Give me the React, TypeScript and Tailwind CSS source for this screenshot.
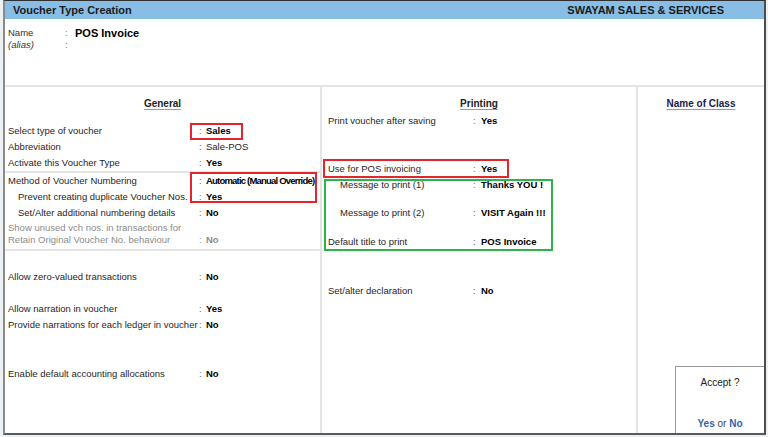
type Row = {
  label: string;
  value: string;
  indent?: boolean;
  bold?: boolean;
  className?: string;
};

function Field({ label, value, indent, bold = true, className = "" }: Row) {
  return (
    <div className={`flex h-[16px] items-center ${className}`}>
      <div className={`w-[191px] shrink-0 whitespace-nowrap ${indent ? "pl-[10px]" : ""}`}>{label}</div>
      <div className="w-[7px] shrink-0 text-[#666]">:</div>
      <div className={`whitespace-nowrap ${bold ? "font-bold text-black" : ""}`}>{value}</div>
    </div>
  );
}

function PrintField({ label, value, indent, className = "" }: Row) {
  return (
    <div className={`flex h-[16px] items-center ${className}`}>
      <div className={`w-[145px] shrink-0 whitespace-nowrap ${indent ? "pl-[12px]" : ""}`}>{label}</div>
      <div className="w-[8px] shrink-0 text-[#666]">:</div>
      <div className="whitespace-nowrap font-bold text-black">{value}</div>
    </div>
  );
}

export default function App() {
  return (
    <div className="h-[437px] w-[768px] bg-[#eef1f4] pl-[3px] font-['Liberation_Sans',Arial,sans-serif] text-[9.5px] text-[#1f1f1f]">
      <div className="relative flex h-[435px] w-[763px] flex-col border-t border-l-2 border-r-2 border-b-2 border-t-[#2f2f2f] border-l-[#8a8a8a] border-r-[#4d4d4d] border-b-[#5a5a5a] bg-white">
        {/* Title bar */}
        <div className="flex h-[18px] shrink-0 items-center justify-between bg-[#88bde6] pl-[8px] pr-[40px] text-[11px] font-bold text-[#1a1a1a]">
          <span>Voucher Type Creation</span>
          <span>SWAYAM SALES &amp; SERVICES</span>
        </div>

        {/* Name */}
        <div className="h-[66px] shrink-0 pl-[3px] pt-[8px]">
          <div className="flex h-[12px] items-center">
            <div className="w-[57px] text-[#333]">Name</div>
            <div className="w-[10px] text-[#777]">:</div>
            <div className="text-[11px] font-bold text-black">POS Invoice</div>
          </div>
          <div className="flex h-[12px] items-center">
            <div className="w-[57px] italic text-[#333]">(alias)</div>
            <div className="w-[10px] text-[#777]">:</div>
          </div>
        </div>

        {/* Columns */}
        <div className="flex flex-1 border-t-2 border-[#e4e4e4]">
          {/* General */}
          <div className="flex w-[317px] shrink-0 flex-col border-r-2 border-[#e4e4e4]">
            <div className="pt-[10px] text-center">
              <span className="inline-block h-[14px] text-[10px] font-bold leading-[14px] text-[#222] underline decoration-[#9a9a9a] underline-offset-2">
                General
              </span>
            </div>
            <div className="mt-[12px] pl-[3px]">
              <Field label="Select type of voucher" value="Sales" />
              <Field label="Abbreviation" value="Sale-POS" bold={false} />
              <Field label="Activate this Voucher Type" value="Yes" />
            </div>
            <div className="border-y-2 border-[#e4e4e4] pl-[3px]">
              <div className="flex h-[16px] items-center">
                <div className="w-[191px] shrink-0 whitespace-nowrap">Method of Voucher Numbering</div>
                <div className="w-[7px] shrink-0 text-[#666]">:</div>
                <div className="whitespace-nowrap font-bold tracking-[-0.8px] text-black">Automatic (Manual Override)</div>
              </div>
              <Field label="Prevent creating duplicate Voucher Nos." value="Yes" indent />
              <Field label="Set/Alter additional numbering details" value="No" indent />
              <div className="flex h-[28px] items-end pb-[3px] pt-[1px] text-[#8c8c8c]">
                <div className="w-[191px] shrink-0 leading-[12px]">
                  <div>Show unused vch nos. in transactions for</div>
                  <div>Retain Original Voucher No. behaviour</div>
                </div>
                <div className="w-[7px] shrink-0 leading-[12px]">:</div>
                <div className="font-bold leading-[12px]">No</div>
              </div>
            </div>
            <div className="pl-[3px]">
              <Field label="Allow zero-valued transactions" value="No" className="mt-[18px]" />
              <Field label="Allow narration in voucher" value="Yes" className="mt-[16px]" />
              <Field label="Provide narrations for each ledger in voucher" value="No" />
              <Field label="Enable default accounting allocations" value="No" className="mt-[33px]" />
            </div>
          </div>

          {/* Printing */}
          <div className="flex w-[316px] shrink-0 flex-col border-r-2 border-[#e4e4e4]">
            <div className="pt-[10px] text-center">
              <span className="inline-block h-[14px] text-[10px] font-bold leading-[14px] text-[#222] underline decoration-[#9a9a9a] underline-offset-2">
                Printing
              </span>
            </div>
            <div className="pl-[6px]">
              <PrintField label="Print voucher after saving" value="Yes" className="mt-[2px]" />
              <PrintField label="Use for POS invoicing" value="Yes" className="mt-[32px]" />
              <PrintField label="Message to print (1)" value="Thanks YOU !" indent />
              <PrintField label="Message to print (2)" value="VISIT Again !!!" indent className="mt-[12px]" />
              <PrintField label="Default title to print" value="POS Invoice" className="mt-[13px]" />
              <PrintField label="Set/alter declaration" value="No" className="mt-[33px]" />
            </div>
          </div>

          {/* Name of Class */}
          <div className="flex flex-1 flex-col">
            <div className="pt-[10px] text-center">
              <span className="inline-block h-[14px] text-[10px] font-bold leading-[14px] text-[#1b1b4d] underline decoration-[#9a9a9a] underline-offset-2">
                Name of Class
              </span>
            </div>
          </div>
        </div>

        {/* Annotation boxes */}
        <div className="absolute left-[185px] top-[122px] h-[17px] w-[53px] border-2 border-[#e3262e]" />
        <div className="absolute left-[185px] top-[171px] h-[31px] w-[127px] border-2 border-[#e3262e]" />
        <div className="absolute left-[318px] top-[158px] h-[19px] w-[186px] border-2 border-[#e3262e]" />
        <div className="absolute left-[319px] top-[178px] h-[72px] w-[229px] border-2 border-[#2db34a]" />

        {/* Accept dialog */}
        <div className="absolute bottom-0 left-[670px] right-0 top-[365px] flex flex-col items-center justify-between border-l border-t border-[#9a9a9a] bg-white pb-[3px] pt-[10px] text-[10px] leading-[12px]">
          <div className="text-[#222]">Accept ?</div>
          <div>
            <span className="font-bold text-[#2f63b0]">Yes</span>
            <span className="text-[#444]"> or </span>
            <span className="font-bold text-[#2f63b0]">No</span>
          </div>
        </div>
      </div>
    </div>
  );
}
